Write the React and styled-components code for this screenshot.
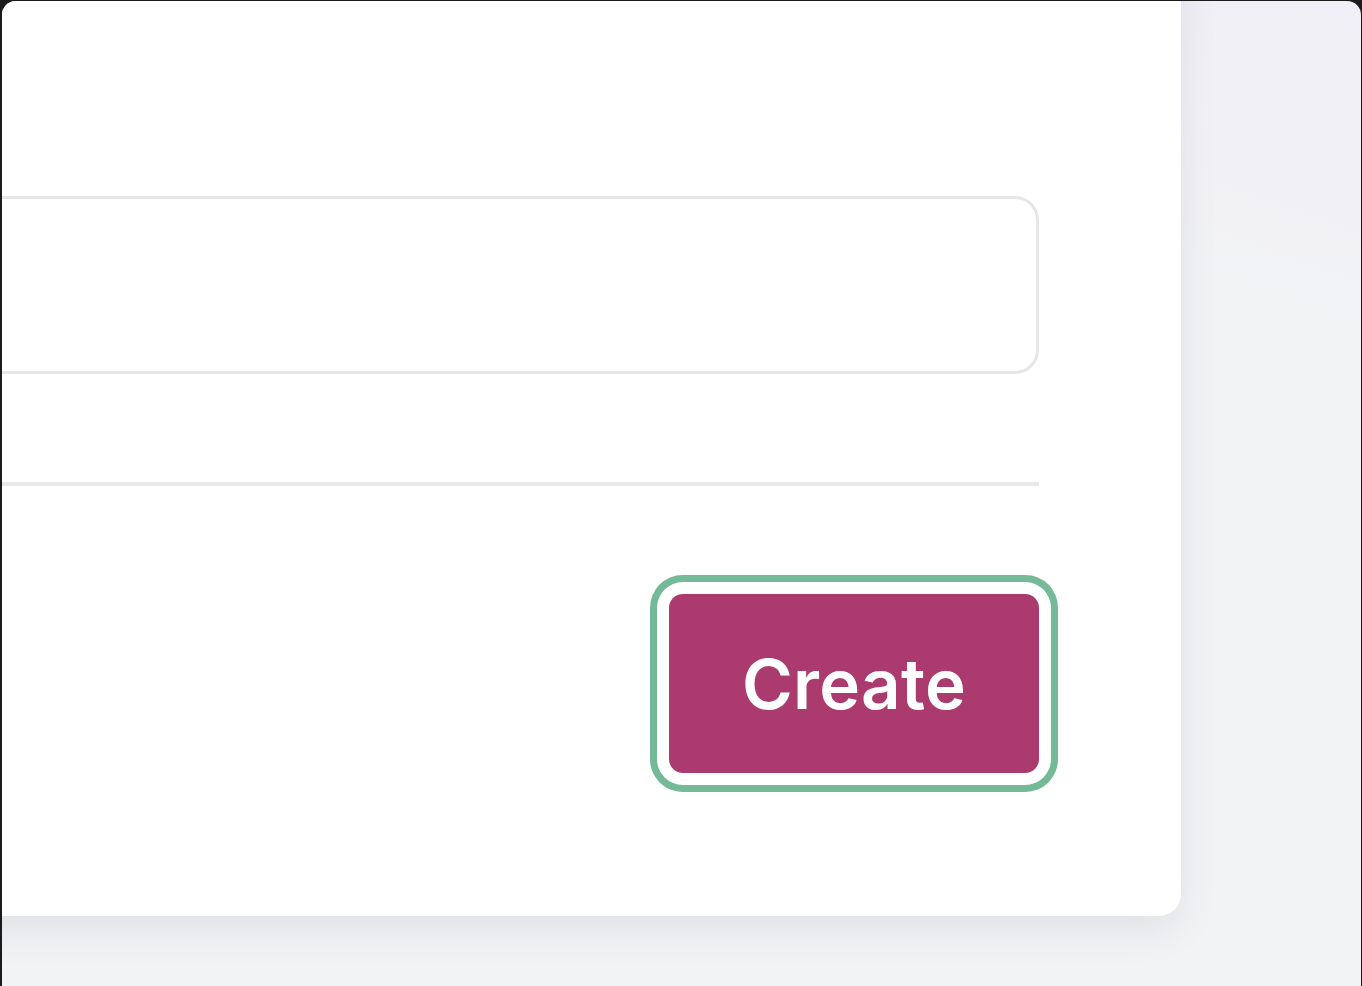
import React from "react";
import styled, { createGlobalStyle } from "styled-components";

const GlobalStyle = createGlobalStyle`
  html, body {
    margin: 0;
    padding: 0;
    height: 100%;
    background: #1b1b1b;
    overflow: hidden;
  }
  #root {
    height: 100%;
  }
`;

const Frame = styled.div`
  margin: 1px 1px 0 2px;
  height: calc(100vh - 1px);
  border-radius: 14px 14px 0 0;
  overflow: hidden;
  background:
    linear-gradient(200deg, #f0eef6 0%, rgba(242, 243, 246, 0) 22%),
    #f2f3f5;
  font-family: Inter, "Noto Sans", sans-serif;
`;

const Card = styled.div`
  margin: -40px 0 0 -200px;
  width: 1379px;
  box-sizing: border-box;
  padding: 235px 142px 143px 200px;
  background: #fff;
  border-radius: 0 0 22px 0;
  box-shadow: 0 14px 40px rgba(20, 22, 40, 0.08);
  display: flex;
  flex-direction: column;
`;

const Field = styled.div`
  height: 178px;
  box-sizing: border-box;
  margin-left: -40px;
  border: 3px solid #e6e6e8;
  border-radius: 24px;
  background: #fff;
`;

const Divider = styled.hr`
  margin: 108px 0 0 -40px;
  border: none;
  height: 4px;
  background: #e8e8ea;
`;

const Footer = styled.div`
  margin-top: 108px;
  display: flex;
  justify-content: flex-end;
`;

const Button = styled.button`
  width: 370px;
  height: 179px;
  border: none;
  border-radius: 14px;
  background: #ab3b6e;
  color: #fff;
  font-family: Inter, "Noto Sans", sans-serif;
  font-size: 69px;
  font-weight: 600;
  letter-spacing: 0.3px;
  cursor: pointer;
  box-shadow: 0 0 0 12px #fff, 0 0 0 19px #74ba98;
`;

export default function App() {
  return (
    <>
      <GlobalStyle />
      <Frame>
        <Card>
          <Field />
          <Divider />
          <Footer>
            <Button>Create</Button>
          </Footer>
        </Card>
      </Frame>
    </>
  );
}
